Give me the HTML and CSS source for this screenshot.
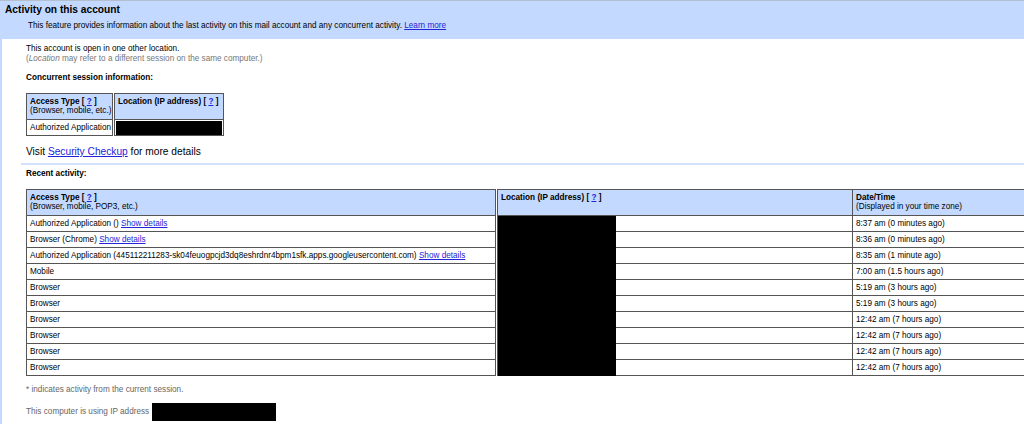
FILE: index.html
```html
<!DOCTYPE html>
<html>
<head>
<meta charset="utf-8">
<title>Activity on this account</title>
<link rel="stylesheet" href="styles.css">
</head>
<body>
<div class="topbar">
  <div class="title">Activity on this account</div>
  <div class="subtitle">This feature provides information about the last activity on this mail account and any concurrent activity. <a href="#">Learn more</a></div>
</div>
<div class="content">
  <p>This account is open in one other location.</p>
  <p class="muted">(<i>Location</i> may refer to a different session on the same computer.)</p>
  <p class="section">Concurrent session information:</p>
  <table class="grid concurrent">
    <colgroup><col class="c-type"><col class="c-loc"></colgroup>
    <thead>
      <tr>
        <td><b>Access Type [ <a href="#">?</a> ]</b><br>(Browser, mobile, etc.)</td>
        <td class="split"><b>Location (IP address) [ <a href="#">?</a> ]</b></td>
      </tr>
    </thead>
    <tbody>
      <tr>
        <td>Authorized Application</td>
        <td class="split boxcell"><span class="redact"></span></td>
      </tr>
    </tbody>
  </table>
  <p class="visit">Visit <a href="#">Security Checkup</a> for more details</p>
  <div class="rule"></div>
  <p class="section recent">Recent activity:</p>
  <div class="activity">
    <table class="grid recent-table">
      <colgroup><col class="r-type"><col class="r-loc"><col class="r-date"></colgroup>
      <thead>
        <tr>
          <td><b>Access Type [ <a href="#">?</a> ]</b><br>(Browser, mobile, POP3, etc.)</td>
          <td class="split"><b>Location (IP address) [ <a href="#">?</a> ]</b></td>
          <td><b>Date/Time</b><br>(Displayed in your time zone)</td>
        </tr>
      </thead>
      <tbody>
        <tr><td>Authorized Application () <a href="#">Show details</a></td><td class="split"></td><td>8:37 am (0 minutes ago)</td></tr>
        <tr><td>Browser (Chrome) <a href="#">Show details</a></td><td class="split"></td><td>8:36 am (0 minutes ago)</td></tr>
        <tr><td>Authorized Application (445112211283-sk04feuogpcjd3dq8eshrdnr4bpm1sfk.apps.googleusercontent.com) <a href="#">Show details</a></td><td class="split"></td><td>8:35 am (1 minute ago)</td></tr>
        <tr><td>Mobile</td><td class="split"></td><td>7:00 am (1.5 hours ago)</td></tr>
        <tr><td>Browser</td><td class="split"></td><td>5:19 am (3 hours ago)</td></tr>
        <tr><td>Browser</td><td class="split"></td><td>5:19 am (3 hours ago)</td></tr>
        <tr><td>Browser</td><td class="split"></td><td>12:42 am (7 hours ago)</td></tr>
        <tr><td>Browser</td><td class="split"></td><td>12:42 am (7 hours ago)</td></tr>
        <tr><td>Browser</td><td class="split"></td><td>12:42 am (7 hours ago)</td></tr>
        <tr><td>Browser</td><td class="split"></td><td>12:42 am (7 hours ago)</td></tr>
      </tbody>
    </table>
    <div class="redact-overlay"></div>
  </div>
  <p class="note">* indicates activity from the current session.</p>
  <div class="ip"><span>This computer is using IP address</span><span class="redact ip-box"></span></div>
</div>
</body>
</html>
```

FILE: styles.css
```css
html, body {
  margin: 0;
  padding: 0;
  overflow: hidden;
}

body {
  background: #c3d9ff;
  border-top: 1px solid #b3bed1;
  font-family: "Liberation Sans", Arial, sans-serif;
  font-size: 8.2px;
  line-height: 10px;
  color: #000;
}

a {
  color: #2323d8;
  text-decoration: underline;
}

p {
  margin: 0;
}

.topbar {
  padding: 3px 0 8px 5px;
}

.title {
  font-size: 10.2px;
  line-height: 12px;
  font-weight: bold;
}

.subtitle {
  margin: 5px 0 0 23px;
  line-height: 10px;
}

.content {
  background: #fff;
  margin-left: 2px;
  padding: 5px 0 40px 24px;
  min-height: 400px;
}

.muted {
  color: #777;
}

.section {
  margin-top: 9px;
  font-weight: bold;
}

.section.recent {
  margin-top: 4px;
}

.grid {
  border-collapse: collapse;
  table-layout: fixed;
  margin-top: 10px;
  border: 1px solid #555;
}

.grid td {
  border: 1px solid #555;
  padding: 2px 3px;
  line-height: 11px;
  vertical-align: top;
  white-space: nowrap;
  overflow: hidden;
  text-align: left;
}

.grid thead td {
  background: #c3d9ff;
  line-height: 9px;
  padding: 3px 3px 4px;
}

.grid td.split {
  border-left: 3px double #555;
}

.concurrent {
  width: 197px;
}

.c-type { width: 87px; }
.c-loc { width: 110px; }

.grid td.boxcell {
  padding: 1px 1px 0 1px;
}

.redact {
  display: block;
  background: #000;
  height: 14px;
}

.visit {
  margin-top: 10px;
  font-size: 10.2px;
  line-height: 12px;
}

.rule {
  margin: 5px 0 0 -5px;
  border-top: 2px solid #d3e2fc;
}

.activity {
  position: relative;
  margin-top: 10px;
  width: 1014px;
}

.activity .grid {
  margin-top: 0;
}

.recent-table {
  width: 1014px;
}

.r-type { width: 470px; }
.r-loc { width: 356px; }
.r-date { width: 188px; }

.redact-overlay {
  position: absolute;
  left: 472px;
  top: 27px;
  width: 118px;
  height: 160px;
  background: #000;
}

.note {
  margin-top: 9px;
  color: #666;
}

.ip {
  display: flex;
  align-items: center;
  gap: 3px;
  margin-top: 8px;
  color: #666;
}

.ip-box {
  width: 124px;
  height: 18px;
}
```
